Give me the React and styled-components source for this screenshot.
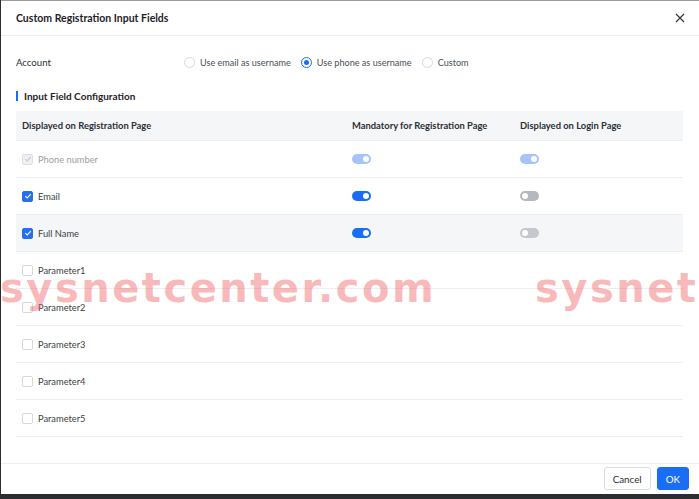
import React from "react";
import styled, { createGlobalStyle } from "styled-components";

const Global = createGlobalStyle`
  html, body { margin: 0; padding: 0; background: #2b2d30; }
  body { font-family: Lato, "Noto Sans", Arial, sans-serif; color: #1f2329; }
  * { box-sizing: border-box; }
`;

const Dialog = styled.div`
  position: relative;
  width: 698px;
  height: 494px;
  margin-left: 1px;
  background: #fff;
  border-top: 1px solid #9a9b9d;
  display: flex;
  flex-direction: column;
  overflow: hidden;
`;

const Header = styled.div`
  height: 35px;
  display: flex;
  align-items: center;
  justify-content: space-between;
  padding: 0 12px 0 15px;
  border-bottom: 1px solid #eceef1;
`;

const Title = styled.div`
  font-size: 10.5px;
  font-weight: 700;
  color: #1f2329;
`;

const Close = styled.button`
  border: 0;
  background: none;
  padding: 0;
  width: 14px;
  height: 14px;
  display: flex;
  align-items: center;
  justify-content: center;
`;

const Body = styled.div`
  flex: 1;
  padding: 18px 15px 0 15px;
  display: flex;
  flex-direction: column;
`;

const AccountRow = styled.div`
  display: flex;
  align-items: center;
  height: 16px;
  font-size: 9.1px;
`;

const Label = styled.div`
  width: 168px;
  font-size: 9.6px;
  color: #2a2f36;
`;

const RadioGroup = styled.div`
  display: flex;
  align-items: center;
  gap: 10px;
`;

const RadioItem = styled.label`
  display: flex;
  align-items: center;
  gap: 5px;
  color: #4a4f57;
`;

const RadioCircle = styled.span`
  width: 11px;
  height: 11px;
  border-radius: 50%;
  border: 1px solid ${(p) => (p.$on ? "#1a6ef5" : "#d4d7dc")};
  display: flex;
  align-items: center;
  justify-content: center;
  &::after {
    content: "";
    width: 5px;
    height: 5px;
    border-radius: 50%;
    background: ${(p) => (p.$on ? "#1a6ef5" : "transparent")};
  }
`;

const SectionTitle = styled.div`
  margin-top: 18px;
  display: flex;
  align-items: center;
  gap: 6px;
  font-size: 10px;
  font-weight: 700;
  color: #1f2329;
  height: 16px;
  &::before {
    content: "";
    width: 2px;
    height: 10px;
    background: #1a6ef5;
  }
`;

const Table = styled.div`
  margin-top: 7px;
  margin-right: 1px;
  display: flex;
  flex-direction: column;
`;

const Row = styled.div`
  display: grid;
  grid-template-columns: 330px 168px 1fr;
  align-items: center;
  height: ${(p) => (p.$head ? "30px" : "37px")};
  padding-left: 6px;
  background: ${(p) => (p.$head || p.$hover ? "#f5f6f8" : "#fff")};
  border-bottom: 1px solid #eceef1;
  font-size: ${(p) => (p.$head ? "9.4px" : "9.3px")};
  color: ${(p) => (p.$head ? "#2a2f36" : "#3a3f47")};
  font-weight: ${(p) => (p.$head ? 700 : 400)};
`;

const Field = styled.div`
  display: flex;
  align-items: center;
  gap: 5px;
  color: ${(p) => (p.$muted ? "#9a9ea6" : "#3a3f47")};
`;

const Box = styled.span`
  width: 11px;
  height: 11px;
  border-radius: 2px;
  border: 1px solid ${(p) => (p.$on ? "#2470f0" : p.$dis ? "#dcdfe4" : "#d4d7dc")};
  background: ${(p) => (p.$on ? "#2470f0" : p.$dis ? "#eef0f3" : "#fff")};
  display: flex;
  align-items: center;
  justify-content: center;
`;

const Toggle = styled.span`
  display: block;
  position: relative;
  width: 19px;
  height: 10px;
  border-radius: 5px;
  background: ${(p) => p.$bg};
  &::after {
    content: "";
    position: absolute;
    top: 2px;
    left: ${(p) => (p.$on ? "11px" : "2px")};
    width: 6px;
    height: 6px;
    border-radius: 50%;
    background: #fff;
  }
`;

const Footer = styled.div`
  height: 31px;
  border-top: 1px solid #eceef1;
  display: flex;
  align-items: center;
  justify-content: flex-end;
  gap: 6px;
  padding: 0 10px 1px 0;
`;

const Button = styled.button`
  height: 23px;
  min-width: ${(p) => (p.$primary ? "31px" : "47px")};
  padding: 0 8px;
  border-radius: 3px;
  border: 1px solid ${(p) => (p.$primary ? "#1a6ef5" : "#dadde2")};
  background: ${(p) => (p.$primary ? "#1a6ef5" : "#fff")};
  color: ${(p) => (p.$primary ? "#fff" : "#2a2f36")};
  font-family: inherit;
  font-size: 9.8px;
`;

const Watermark = styled.div`
  position: absolute;
  top: 264px;
  left: ${(p) => p.$x}px;
  font-family: "DejaVu Sans", sans-serif;
  font-weight: 700;
  font-size: 40px;
  letter-spacing: 2.5px;
  color: rgba(240, 96, 100, 0.45);
  white-space: nowrap;
  pointer-events: none;
`;

const Check = ({ color = "#fff" }) => (
  <svg width="8" height="8" viewBox="0 0 8 8">
    <path d="M1.3 4.1 L3.2 5.9 L6.8 2.2" fill="none" stroke={color} strokeWidth="1.1" />
  </svg>
);

const rows = [
  { name: "Phone number", state: "dis", mand: "#a6c4f7", mandOn: true, login: "#a6c4f7", loginOn: true },
  { name: "Email", state: "on", mand: "#1a6ef5", mandOn: true, login: "#b5b8be", loginOn: false },
  { name: "Full Name", state: "on", mand: "#1a6ef5", mandOn: true, login: "#c4c7cc", loginOn: false, hover: true },
  { name: "Parameter1" },
  { name: "Parameter2" },
  { name: "Parameter3" },
  { name: "Parameter4" },
  { name: "Parameter5" },
];

export default function App() {
  return (
    <>
      <Global />
      <Dialog>
        <Header>
          <Title>Custom Registration Input Fields</Title>
          <Close aria-label="close">
            <svg width="10" height="10" viewBox="0 0 10 10">
              <path d="M1 1 L9 9 M9 1 L1 9" stroke="#333" strokeWidth="1.1" />
            </svg>
          </Close>
        </Header>
        <Body>
          <AccountRow>
            <Label>Account</Label>
            <RadioGroup>
              <RadioItem><RadioCircle />Use email as username</RadioItem>
              <RadioItem><RadioCircle $on />Use phone as username</RadioItem>
              <RadioItem><RadioCircle />Custom</RadioItem>
            </RadioGroup>
          </AccountRow>
          <SectionTitle>Input Field Configuration</SectionTitle>
          <Table>
            <Row $head>
              <div>Displayed on Registration Page</div>
              <div>Mandatory for Registration Page</div>
              <div>Displayed on Login Page</div>
            </Row>
            {rows.map((r) => (
              <Row key={r.name} $hover={r.hover}>
                <Field $muted={r.state === "dis"}>
                  <Box $on={r.state === "on"} $dis={r.state === "dis"}>
                    {r.state === "on" && <Check />}
                    {r.state === "dis" && <Check color="#c3c6cc" />}
                  </Box>
                  {r.name}
                </Field>
                <div>{r.mand && <Toggle $bg={r.mand} $on={r.mandOn} />}</div>
                <div>{r.login && <Toggle $bg={r.login} $on={r.loginOn} />}</div>
              </Row>
            ))}
          </Table>
        </Body>
        <Footer>
          <Button>Cancel</Button>
          <Button $primary>OK</Button>
        </Footer>
        <Watermark $x={-1}>sysnetcenter.com</Watermark>
        <Watermark $x={534}>sysnet</Watermark>
      </Dialog>
    </>
  );
}
